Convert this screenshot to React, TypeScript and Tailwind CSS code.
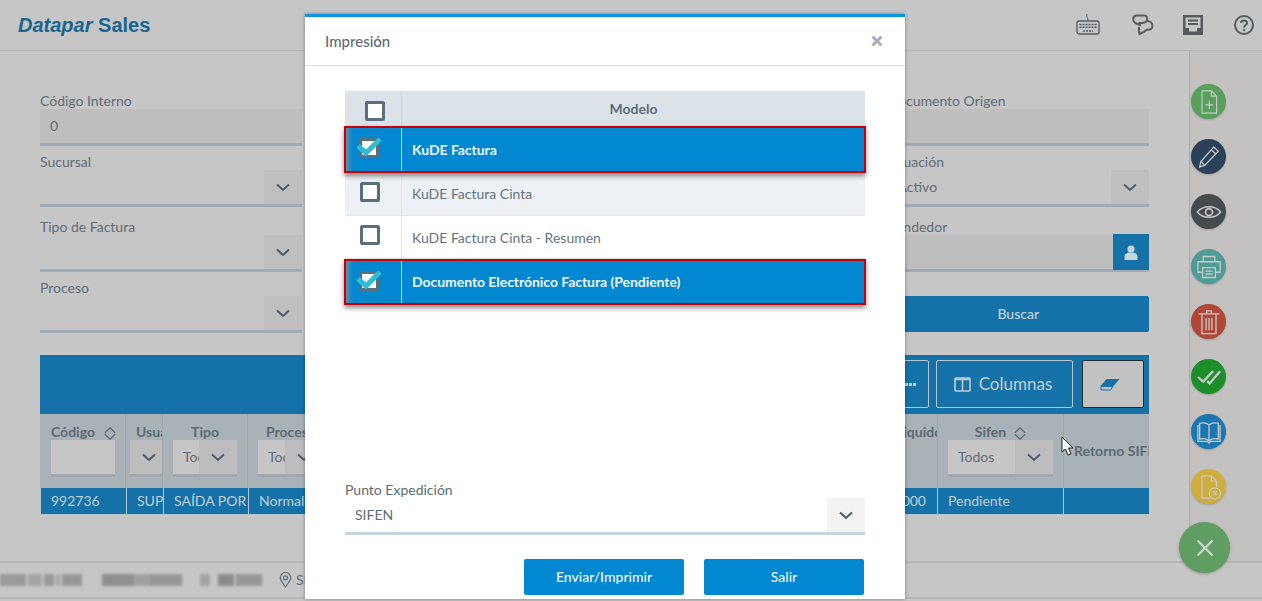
import React from "react"

const Chevron: React.FC<{ className?: string }> = ({ className = "" }) => (
    <svg width="14" height="9" viewBox="0 0 14 9" fill="none" className={className}>
        <path d="M1 1.5 L7 7 L13 1.5" stroke="currentColor" strokeWidth="2" />
    </svg>
)

const SortIcon: React.FC = () => (
    <svg width="12" height="13" viewBox="0 0 12 13" fill="none" className="shrink-0 text-[#5b6a73]">
        <path d="M0.8 5.9 L6 0.8 L11.2 5.9 M0.8 7.1 L6 12.2 L11.2 7.1" stroke="currentColor" strokeWidth="1.3" />
    </svg>
)

const Field: React.FC<{ label: string, value?: string, select?: boolean, className?: string, children?: React.ReactNode }> = ({ label, value, select, className = "", children }) => (
    <div className={`flex flex-col ${className}`}>
        <label className="h-[17px] text-sm leading-[17px] text-[#5f6c76]">{label}</label>
        <div className={`relative flex h-[37px] items-center border-b-[3px] border-[#a0abb3] text-sm text-[#5f6c76] ${select ? "" : "bg-[#bebebe]"}`}>
            <span className="pl-[10px]">{value}</span>
            {select && (
                <span className="absolute right-0 top-0 flex h-[34px] w-[38px] items-center justify-center bg-[#bfbfbf] text-[#4d5c67]">
                    <Chevron />
                </span>
            )}
            {children}
        </div>
    </div>
)

const HeadCell: React.FC<{ children: React.ReactNode, className?: string }> = ({ children, className = "" }) => (
    <div className={`flex h-[74px] flex-col overflow-hidden border-r border-[#9ca7ac] ${className}`}>{children}</div>
)

const HeadLabel: React.FC<{ children: React.ReactNode, className?: string }> = ({ children, className = "" }) => (
    <div className={`flex h-[26px] shrink-0 items-end whitespace-nowrap leading-[16px] ${className}`}>{children}</div>
)

const HeadSelect: React.FC<{ text?: string, className?: string, textW: string, chevW: string }> = ({ text, className = "", textW, chevW }) => (
    <div className={`flex h-[37px] shrink-0 border-b-[3px] border-[#a0a9ae] text-sm font-normal text-[#5f6c76] ${className}`}>
        <span className={`flex items-center overflow-hidden bg-[#c6c6c6] whitespace-nowrap ${textW}`}>{text}</span>
        <span className={`flex shrink-0 items-center justify-center bg-[#bdbdbd] text-[#4d5c67] ${chevW}`}><Chevron /></span>
    </div>
)

const BodyCell: React.FC<{ children?: React.ReactNode, className?: string }> = ({ children, className = "" }) => (
    <div className={`flex h-full items-center overflow-hidden whitespace-nowrap border-r border-[#b7c7d0] text-sm text-[#c3ced4] ${className}`}>{children}</div>
)

const Circle: React.FC<{ color: string, children: React.ReactNode }> = ({ color, children }) => (
    <div className={`flex h-[35px] w-[35px] items-center justify-center rounded-full shadow-[0_1px_2px_rgba(0,0,0,0.2)] ${color}`}>
        <svg width="28" height="28" viewBox="0 0 24 24" fill="none" stroke="#c9c9c9" strokeWidth="1">{children}</svg>
    </div>
)

const CheckBox: React.FC<{ checked?: boolean, className?: string }> = ({ checked, className = "" }) => (
    <span className={`relative block h-5 w-5 rounded-[2px] border-[3px] border-[#586f7e] bg-white ${className}`}>
        {checked && (
            <svg width="27" height="21" viewBox="0 0 27 21" fill="none" className="absolute -left-[6px] -top-[5px]">
                <path d="M2 10 L10 17 L24 3" stroke="#2dbdd6" strokeWidth="5" />
            </svg>
        )}
    </span>
)

const ModelRow: React.FC<{ label: string, selected?: boolean, stripe?: boolean, h: string }> = ({ label, selected, stripe, h }) => {
    if (selected) {
        return (
            <div className={`relative z-10 -mx-px flex border-2 border-[#c8000a] bg-[#0288d1] text-sm font-bold tracking-[-0.05px] text-[#eef6fb] shadow-[0_3px_5px_rgba(0,0,0,0.45)] ${h}`}>
                <div className="flex w-[56px] items-center border-r border-[#a9d5ee] pl-[13px] shadow-[inset_6px_0_5px_-3px_#6e8ea6]">
                    <CheckBox checked className="mb-[3px]" />
                </div>
                <div className="flex items-center pl-[10px]">{label}</div>
            </div>
        )
    }
    return (
        <div className={`flex border-b border-[#dfe5ea] text-sm text-[#647480] ${stripe ? "bg-[#edf1f5]" : "bg-white"} ${h}`}>
            <div className="flex w-[57px] items-center border-r border-[#dfe5ea] pl-[15px]">
                <CheckBox className="mb-[5px]" />
            </div>
            <div className="flex items-center pl-[10px]">{label}</div>
        </div>
    )
}

const blurBlocks = [
    [0, 26, "#9a9a9a"], [28, 14, "#a5a5a5"], [44, 10, "#999999"], [56, 4, "#a8a8a8"], [62, 20, "#969696"],
    [102, 32, "#8f8f8f"], [134, 16, "#a0a0a0"], [150, 32, "#979797"],
    [200, 10, "#a3a3a3"], [218, 16, "#8b8b8b"], [236, 26, "#979797"],
] as [number, number, string][]

export default function App() {
    return (
        <div className="relative flex h-[601px] w-[1262px] flex-col overflow-hidden bg-[#c6c6c6] font-[Lato,sans-serif]">
            <header className="flex h-[51px] shrink-0 items-center justify-between border-b border-[#b6b6b6] pl-[18px] pr-[8px]">
                <div className="font-['Liberation_Sans',sans-serif] text-[20px] font-bold leading-none text-[#17658f]">
                    <i>Datapar</i> <span>Sales</span>
                </div>
                <div className="flex items-center text-[#565d61]">
                    <svg width="24" height="22" viewBox="0 0 24 22" fill="none" stroke="currentColor" className="mr-[32px]">
                        <path d="M11 0 C10 3 12 3 12 7" strokeWidth="1" />
                        <rect x="1" y="7" width="22" height="13" rx="2" strokeWidth="1.3" />
                        <path d="M3.5 10.5 H20.5 M3.5 13.2 H20.5 M7 17 H17" strokeWidth="1.6" strokeDasharray="2 1" />
                    </svg>
                    <svg width="22" height="22" viewBox="0 0 22 22" fill="none" stroke="currentColor" strokeWidth="2" className="mr-[29px]">
                        <path d="M5 1.5 H12 C15 1.5 15.5 4 15 6 C14.5 8.5 12 9 9.5 9 H7.5 L8 11 C4 10 1 8 1.2 5 C1.3 3 2.8 1.5 5 1.5 Z" />
                        <path d="M15 7 C18 7 20.5 9 20.5 12 C20.5 15 18 16 15 15.5 L12 18 L7.5 20 C6.8 17 6.8 15 7 13" />
                    </svg>
                    <svg width="20" height="20" viewBox="0 0 20 20" className="mr-[31px]">
                        <path fillRule="evenodd" fill="currentColor" d="M0 0 H20 V20 H0 Z M2.5 2.5 V13 H6 V16.5 H14 V13 H17.5 V2.5 Z" />
                        <path d="M5 5.5 H15 M5 9 H15" stroke="currentColor" strokeWidth="2" />
                    </svg>
                    <svg width="20" height="20" viewBox="0 0 20 20" fill="none" stroke="currentColor" strokeWidth="2">
                        <circle cx="10" cy="10" r="9" />
                        <path d="M7 8 C7 4.5 13 4.5 13 8 C13 10 10 10 10 12.5" />
                        <circle cx="10" cy="15" r="1" fill="currentColor" strokeWidth="0.5" />
                    </svg>
                </div>
            </header>

            <div className="flex h-[510px] shrink-0">
                <main className="flex-1 px-[40px] pt-[41px]">
                    <div className="grid grid-cols-4 gap-x-[21px]">
                        <div className="flex flex-col">
                            <Field label="Código Interno" value="0" />
                            <Field label="Sucursal" select className="mt-[7px]" />
                            <Field label="Tipo de Factura" select className="mt-[11px]" />
                            <Field label="Proceso" select className="mt-[7px]" />
                        </div>
                        <div />
                        <div />
                        <div className="flex flex-col">
                            <Field label="Documento Origen" />
                            <Field label="Situación" value="Activo" select className="mt-[7px]" />
                            <Field label="Vendedor" className="mt-[11px]">
                                <span className="absolute right-0 -top-px flex h-[36px] w-[36px] items-center justify-center bg-[#1472a8]">
                                    <svg width="14" height="15" viewBox="0 0 14 15" fill="#c6d4dc">
                                        <circle cx="7" cy="4" r="3.6" />
                                        <path d="M0.5 15 V11.5 C0.5 9 3 8 4.5 7.5 H9.5 C11 8 13.5 9 13.5 11.5 V15 Z" />
                                    </svg>
                                </span>
                            </Field>
                            <button className="mt-[24px] h-[36px] rounded-[2px] bg-[#1472a8] text-sm font-medium text-[#c3d2da]">Buscar</button>
                        </div>
                    </div>

                    <section className="mt-[22px]">
                        <div className="flex h-[59px] items-start justify-end gap-[7px] bg-[#1472a8] pr-[5px] pt-[5px]">
                            <button className="flex h-[48px] w-[60px] items-center justify-end gap-[1px] rounded-[2px] border border-[#b7c7d0] pr-[12px]">
                                <span className="h-[3px] w-[3px] bg-[#c3ced4]" />
                                <span className="h-[3px] w-[3px] bg-[#c3ced4]" />
                                <span className="h-[3px] w-[3px] bg-[#c3ced4]" />
                            </button>
                            <button className="flex h-[48px] w-[137px] items-center justify-center gap-[8px] rounded-[2px] border border-[#b7c7d0] pr-[3px] text-[17px] text-[#c3ced4]">
                                <svg width="17" height="15" viewBox="0 0 17 15" fill="none" stroke="currentColor" strokeWidth="1.6">
                                    <rect x="1" y="1" width="15" height="13" rx="1" />
                                    <path d="M8.5 1 V14 M1 2.5 H16" />
                                </svg>
                                Columnas
                            </button>
                            <button className="ml-[2px] flex h-[48px] w-[62px] items-center justify-center rounded-[2px] border border-[#22292e] bg-[#c2c2c2]">
                                <svg width="20" height="13" viewBox="0 0 20 13" className="mr-[6px]">
                                    <path d="M6.5 1 H19.5 L13.5 8 H0.5 Z" fill="#1472a8" />
                                    <path d="M1 8.5 H13 L10.5 12 H1 Z" fill="none" stroke="#1472a8" strokeWidth="1" />
                                </svg>
                            </button>
                        </div>

                        <div className="grid grid-cols-[86px_37px_85px_85px_1fr_85px_126px_85px] bg-[#a9b2b6] text-sm font-bold text-[#5b6a73]">
                            <HeadCell className="pl-[11px]">
                                <HeadLabel className="gap-[9px]">Código <SortIcon /></HeadLabel>
                                <div className="h-[37px] w-[64px] shrink-0 border-b-[3px] border-[#a0a9ae] bg-[#c6c6c6]" />
                            </HeadCell>
                            <HeadCell className="pl-[4px]">
                                <HeadLabel className="pl-[6px]">Usuario</HeadLabel>
                                <HeadSelect textW="w-0" chevW="w-[38px]" />
                            </HeadCell>
                            <HeadCell className="px-[10px]">
                                <HeadLabel className="justify-center">Tipo</HeadLabel>
                                <HeadSelect text="Todos" textW="w-[26px] pl-[10px]" chevW="w-[38px]" />
                            </HeadCell>
                            <HeadCell className="pl-[10px]">
                                <HeadLabel className="pl-[8px]">Proceso</HeadLabel>
                                <HeadSelect text="Todos" textW="w-[27px] pl-[10px]" chevW="w-[38px]" />
                            </HeadCell>
                            <HeadCell>{null}</HeadCell>
                            <HeadCell className="pl-[43px]">
                                <HeadLabel>Liquido</HeadLabel>
                            </HeadCell>
                            <HeadCell className="px-[10px]">
                                <HeadLabel className="justify-center gap-[8px]">Sifen <SortIcon /></HeadLabel>
                                <HeadSelect text="Todos" textW="w-[67px] pl-[10px]" chevW="w-[38px]" />
                            </HeadCell>
                            <div className="flex h-[74px] items-center overflow-hidden whitespace-nowrap pl-[10px]">Retorno SIFEN</div>
                        </div>

                        <div className="grid h-[27px] grid-cols-[86px_37px_85px_85px_1fr_85px_126px_85px] border-b border-l border-[#b7c7d0] bg-[#1472a8]">
                            <BodyCell className="pl-[10px]">992736</BodyCell>
                            <BodyCell className="pl-[10px]">SUP</BodyCell>
                            <BodyCell className="pl-[10px]">SAÍDA POR</BodyCell>
                            <BodyCell className="pl-[10px]">Normal</BodyCell>
                            <BodyCell />
                            <BodyCell className="justify-end pr-[11px]">1.000</BodyCell>
                            <BodyCell className="pl-[10px]">Pendiente</BodyCell>
                            <BodyCell className="border-r-0" />
                        </div>
                    </section>
                </main>

                <aside className="flex w-[73px] shrink-0 flex-col items-start gap-[20px] border-l border-[#adadad] bg-[#c4c2c0] pl-px pt-[33px]">
                    <Circle color="bg-[#58a05c]">
                        <path d="M6 2.5 H14 L18.5 7 V21.5 H6 Z M14 2.5 V7 H18.5 M9 14.5 H15.5 M12.2 11 V18" />
                    </Circle>
                    <Circle color="bg-[#2b4059]">
                        <path d="M16 3.5 L20 7 L8.5 19 L4 20.5 L5 16 Z M14 6 L18 9.5 M5.5 16 L8 19" strokeWidth="1.1" />
                    </Circle>
                    <Circle color="bg-[#454a4c]">
                        <path d="M2 12 C7 6 17 6 22 12 C17 18 7 18 2 12 Z" strokeWidth="1.2" />
                        <circle cx="12" cy="12" r="3" strokeWidth="1.5" />
                    </Circle>
                    <Circle color="bg-[#4e9d94]">
                        <path d="M7 7.5 V3 H17 V7.5 M6.5 16.5 H2.5 V7.5 H21.5 V16.5 H17.5 M6.5 12.5 H17.5 V21 H6.5 Z M9 15.5 H15 M9 18 H15" strokeWidth="1.1" />
                    </Circle>
                    <Circle color="bg-[#b04737]">
                        <path d="M3 5 H21 M6 5 V22 H18 V5 M10 5 V2.5 H14 V5 M9.5 8.5 V19 M12 8.5 V19 M14.5 8.5 V19" strokeWidth="1.1" />
                    </Circle>
                    <Circle color="bg-[#1c8f2b]">
                        <path d="M2.5 12 L7 16 L15.5 7 M10.5 15.5 L12.5 17.5 L21.5 7" strokeWidth="2" />
                    </Circle>
                    <Circle color="bg-[#1a77b1]">
                        <path d="M12 6 C10 4 6 4 4 4.5 V18 C7 17.5 10 17.5 12 19.5 C14 17.5 17 17.5 20 18 V4.5 C18 4 14 4 12 6 Z M12 6 V19.5 M2.5 6 V20 H10.5 L12 21.5 L13.5 20 H21.5 V6" strokeWidth="1.1" />
                    </Circle>
                    <Circle color="bg-[#cfae3c]">
                        <path d="M6 2.5 H14 L18.5 7 V12 M14 2.5 V7 H18.5 M13 21.5 H6 V2.5" strokeWidth="1.1" />
                        <circle cx="17" cy="17.5" r="4.8" />
                        <path d="M15.3 15.8 L18.7 19.2 M18.7 15.8 L15.3 19.2" />
                    </Circle>
                </aside>
            </div>

            <footer className="relative flex h-[38px] shrink-0 items-center border-y-2 border-t-[#b6b6b6] border-b-[#b4b4b4] bg-[#c6c6c6] text-sm text-[#5f6c76]">
                <div className="relative h-[12px] w-[262px] blur-[1.5px]">
                    {blurBlocks.map(([left, width, color]) => (
                        <span key={left} className="absolute top-0 h-[12px]" style={{ left, width, backgroundColor: color }} />
                    ))}
                </div>
                <svg width="13" height="16" viewBox="0 0 13 16" fill="none" stroke="currentColor" strokeWidth="1.2" className="ml-[17px] mr-[4px]">
                    <path d="M6.5 15 C3 10.5 1.2 8 1.2 5.8 A5.3 5.3 0 0 1 11.8 5.8 C11.8 8 10 10.5 6.5 15 Z" />
                    <circle cx="6.5" cy="5.8" r="2" />
                </svg>
                <span>SIFEN</span>
            </footer>

            <div className="absolute left-[305px] top-[14px] flex h-[585px] w-[600px] flex-col border-t-[3px] border-[#0a95e5] bg-white shadow-[0_0_4px_rgba(0,0,0,0.35)]">
                <div className="flex h-[49px] shrink-0 items-center justify-between border-b border-[#e0e0e0] pl-[20px] pr-[22px]">
                    <span className="text-[15px] font-medium text-[#5f6c76]">Impresión</span>
                    <svg width="12" height="12" viewBox="0 0 12 12" stroke="#a9b0b5" strokeWidth="3">
                        <path d="M1.5 1.5 L10.5 10.5 M10.5 1.5 L1.5 10.5" />
                    </svg>
                </div>
                <div className="mx-[40px] mt-[25px] flex flex-col">
                    <div className="flex h-[35px] bg-[#dce3e8]">
                        <div className="flex w-[57px] items-center border-r border-[#c9d4da] pl-[20px]"><CheckBox className="mt-[5px]" /></div>
                        <div className="flex flex-1 items-center justify-center text-sm font-bold text-[#5f6c76]">Modelo</div>
                    </div>
                    <ModelRow label="KuDE Factura" selected h="h-[47px]" />
                    <ModelRow label="KuDE Factura Cinta" stripe h="h-[43px]" />
                    <ModelRow label="KuDE Factura Cinta - Resumen" h="h-[43px] pt-px" />
                    <ModelRow label="Documento Electrónico Factura (Pendiente)" selected h="h-[46px]" />
                </div>
                <div className="mx-[40px] mt-auto flex flex-col">
                    <label className="h-[17px] text-sm leading-[15px] text-[#5f6c76]">Punto Expedición</label>
                    <div className="relative mt-[-1px] flex h-[37px] items-center border-b-[3px] border-[#c5d5df] pl-[10px] text-sm text-[#5f6c76]">
                        SIFEN
                        <span className="absolute right-0 top-0 flex h-[34px] w-[38px] items-center justify-center bg-[#f3f3f3] text-[#4d5c67]">
                            <Chevron />
                        </span>
                    </div>
                    <div className="mt-[24px] mb-[4px] flex justify-end gap-[20px] pr-px">
                        <button className="h-[36px] w-[160px] rounded-[2px] bg-[#0288d1] text-sm font-medium text-[#eef6fb]">Enviar/Imprimir</button>
                        <button className="h-[36px] w-[160px] rounded-[2px] bg-[#0288d1] text-sm font-medium text-[#eef6fb]">Salir</button>
                    </div>
                </div>
            </div>

            <button className="absolute left-[1179px] top-[522px] flex h-[51px] w-[51px] items-center justify-center rounded-full bg-[#5f9d63] shadow-[0_1px_3px_rgba(0,0,0,0.25)]">
                <svg width="18" height="18" viewBox="0 0 18 18" stroke="#c9d6ca" strokeWidth="2.4">
                    <path d="M1.5 1.5 L16.5 16.5 M16.5 1.5 L1.5 16.5" />
                </svg>
            </button>

            <svg width="14" height="21" viewBox="0 0 14 21" className="absolute left-[1061px] top-[436px]">
                <path d="M1 1 V16 L4.5 13 L7 19 L10 18 L7.5 12 L12 12 Z" fill="#fff" stroke="#222" strokeWidth="1" />
            </svg>
        </div>
    )
}
